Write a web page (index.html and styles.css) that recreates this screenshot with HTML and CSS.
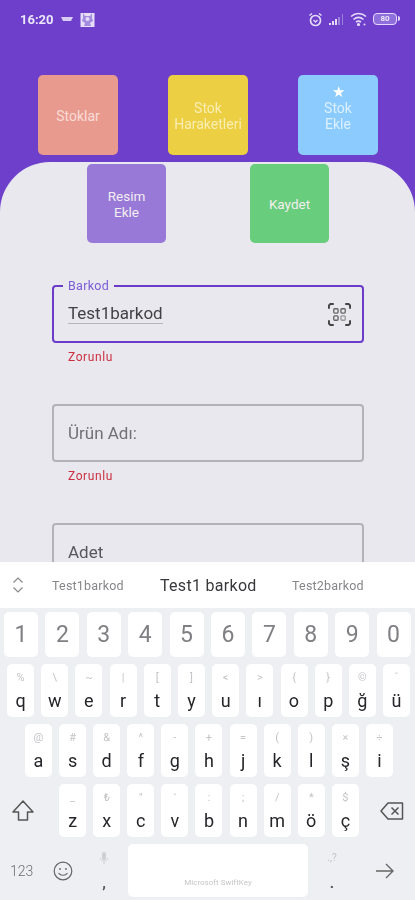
FILE: index.html
```html
<!DOCTYPE html>
<html lang="tr">

<head>
    <meta charset="UTF-8" />
    <meta name="viewport" content="width=device-width, initial-scale=1" />
    <title>Stok Ekle</title>
    <link rel="stylesheet" href="styles.css">
</head>

<body>

    <div class="app">
        <header class="top">
            <div class="status-bar">
                <span class="time">16:20</span>
                <svg class="note-pill" width="12" height="6" viewBox="0 0 12 6">
                    <path d="M0 1h12L10 5H2z" fill="#d9cdf5" />
                </svg>
                <svg class="note-img" width="15" height="15" viewBox="0 0 15 15">
                    <rect x="0.5" y="1" width="14" height="14" fill="#e6def8" />
                    <path d="M3 1l2 3h5l2-3v5l1 3-3 2 1 3H4l1-3-3-2 1-3z" fill="#a58be0" />
                    <circle cx="7.5" cy="7" r="2" fill="#e6def8" />
                </svg>
                <span class="status-gap"></span>
                <svg width="15" height="15" viewBox="0 0 15 15" fill="none" stroke="#e4daf8">
                    <circle cx="7.5" cy="8.5" r="5" stroke-width="1.7" />
                    <path d="M1.5 3.5l2.5-2M13.5 3.5l-2.5-2" stroke-width="1.5" />
                    <path d="M5.5 8l2 2 2-2" stroke-width="1.3" />
                </svg>
                <svg class="signal" width="16" height="13" viewBox="0 0 16 13">
                    <path d="M1 10h2v2H1zM4 8h2v4H4zM7 6h2v6H7z" fill="#e4daf8" />
                    <path d="M10 4h2v8h-2zM14 1h1v11h-1z" fill="#9a7fdd" />
                </svg>
                <svg class="wifi" width="17" height="14" viewBox="0 0 17 14" fill="none" stroke="#e4daf8"
                    stroke-width="1.6">
                    <path d="M1 4.5c4.5-4 10.500-4 15 0M3.500 7.500c3-2.500 7-2.500 10 0M6 10c1.500-1 3.500-1 5 0" />
                    <circle cx="8.5" cy="12.5" r="0.8" fill="#e4daf8" />
                    <circle cx="14.5" cy="12.5" r="1" fill="#e4daf8" stroke="none" />
                </svg>
                <span class="battery"><span class="battery-level">80</span></span>
            </div>

            <div class="tile-row tile-row-first">
                <a class="tile tile-red">Stoklar</a>
                <a class="tile tile-yellow">Stok<br>Haraketleri</a>
                <a class="tile tile-blue">
                    <span class="tile-star">★</span>
                    Stok<br>Ekle
                </a>
            </div>
        </header>

        <main class="panel">
            <div class="tile-row tile-row-second">
                <a class="tile tile-purple">Resim<br>Ekle</a>
                <a class="tile tile-green">Kaydet</a>
            </div>

            <div class="form">
                <div class="form-group">
                    <div class="field field-active">
                        <span class="field-label">Barkod</span>
                        <span class="field-value">Test1barkod</span>
                        <svg class="scan-icon" width="23" height="23" viewBox="0 0 24 24" fill="none"
                            stroke="#444" stroke-width="2">
                            <path d="M1 6V2.500L2.500 1H6M18 1h3.500L23 2.500V6M23 18v3.500L21.500 23H18M6 23H2.500L1 21.500V18" />
                            <g stroke-width="1.400" stroke="#666">
                                <rect x="6" y="6" width="4.500" height="4.500" rx="1" />
                                <rect x="13.500" y="6" width="4.500" height="4.500" rx="1" />
                                <rect x="6" y="13.500" width="4.500" height="4.500" rx="1" />
                                <rect x="13.500" y="13.500" width="4.500" height="4.500" rx="1" stroke="#999" />
                            </g>
                        </svg>
                    </div>
                    <div class="field-error">Zorunlu</div>
                </div>

                <div class="form-group">
                    <div class="field">
                        <span class="field-hint">Ürün Adı:</span>
                    </div>
                    <div class="field-error">Zorunlu</div>
                </div>

                <div class="form-group">
                    <div class="field">
                        <span class="field-hint field-hint-dark">Adet</span>
                    </div>
                </div>
            </div>
        </main>

        <section class="keyboard">
            <div class="suggestions">
                <svg class="suggest-toggle" width="12" height="16" viewBox="0 0 12 16" fill="none" stroke="#888"
                    stroke-width="1.2">
                    <path d="M1.5 5.5L6 1l4.500 4.500M1.500 10.500L6 15l4.500-4.500" />
                </svg>
                <span class="suggest suggest-left">Test1barkod</span>
                <span class="suggest suggest-main">Test1 barkod</span>
                <span class="suggest suggest-right">Test2barkod</span>
            </div>

            <div class="keys">
                <div class="key-row digits">
                    <span class="key digit">1</span>
                    <span class="key digit">2</span>
                    <span class="key digit">3</span>
                    <span class="key digit">4</span>
                    <span class="key digit">5</span>
                    <span class="key digit">6</span>
                    <span class="key digit">7</span>
                    <span class="key digit">8</span>
                    <span class="key digit">9</span>
                    <span class="key digit">0</span>
                </div>

                <div class="key-row letters-top">
                    <span class="key"><small>%</small>q</span>
                    <span class="key"><small>\</small>w</span>
                    <span class="key"><small>~</small>e</span>
                    <span class="key"><small>|</small>r</span>
                    <span class="key"><small>[</small>t</span>
                    <span class="key"><small>]</small>y</span>
                    <span class="key"><small>&lt;</small>u</span>
                    <span class="key"><small>&gt;</small>ı</span>
                    <span class="key"><small>{</small>o</span>
                    <span class="key"><small>}</small>p</span>
                    <span class="key"><small>©</small>ğ</span>
                    <span class="key"><small>ˇ</small>ü</span>
                </div>

                <div class="key-row letters-middle">
                    <span class="key"><small>@</small>a</span>
                    <span class="key"><small>#</small>s</span>
                    <span class="key"><small>&amp;</small>d</span>
                    <span class="key"><small>^</small>f</span>
                    <span class="key"><small>-</small>g</span>
                    <span class="key"><small>+</small>h</span>
                    <span class="key"><small>=</small>j</span>
                    <span class="key"><small>(</small>k</span>
                    <span class="key"><small>)</small>l</span>
                    <span class="key"><small>×</small>ş</span>
                    <span class="key"><small>÷</small>i</span>
                </div>

                <div class="key-row letters-bottom">
                    <span class="key-plain">
                        <svg width="24" height="24" viewBox="0 0 24 24" fill="none" stroke="#555"
                            stroke-width="1.5" stroke-linejoin="round">
                            <path d="M12 2L2 13h5.500v8h9v-8H22z" />
                        </svg>
                    </span>
                    <span class="key"><small>_</small>z</span>
                    <span class="key"><small>₺</small>x</span>
                    <span class="key"><small>"</small>c</span>
                    <span class="key"><small>'</small>v</span>
                    <span class="key"><small>:</small>b</span>
                    <span class="key"><small>;</small>n</span>
                    <span class="key"><small>/</small>m</span>
                    <span class="key"><small>*</small>ö</span>
                    <span class="key"><small>$</small>ç</span>
                    <span class="key-plain">
                        <svg width="24" height="20" viewBox="0 0 24 20" fill="none" stroke="#555"
                            stroke-width="1.5" stroke-linejoin="round">
                            <path d="M8 2h14.500v16H8L1 10z" />
                            <path d="M11.500 6.500l7 7M18.500 6.500l-7 7" />
                        </svg>
                    </span>
                </div>

                <div class="key-row bottom-row">
                    <span class="bottom-num">123</span>
                    <svg class="bottom-emoji" width="20" height="20" viewBox="0 0 20 20" fill="none" stroke="#666"
                        stroke-width="1.2">
                        <circle cx="10" cy="10" r="8.800" />
                        <circle cx="7" cy="8" r="0.900" fill="#666" stroke="none" />
                        <circle cx="13" cy="8" r="0.900" fill="#666" stroke="none" />
                        <path d="M5.500 12c2 3 7 3 9 0" />
                    </svg>
                    <span class="bottom-side">
                        <svg width="8" height="12" viewBox="0 0 8 12">
                            <rect x="2" y="0" width="4" height="8" rx="2" fill="#cfd0d4" />
                            <path d="M0.500 6c0 4 7 4 7 0M4 10v2" fill="none" stroke="#cfd0d4" />
                        </svg>
                        <b>,</b>
                    </span>
                    <span class="space-key">Microsoft SwiftKey</span>
                    <span class="bottom-side bottom-side-right">
                        <small>.,?</small>
                        <b>.</b>
                    </span>
                    <svg class="bottom-arrow" width="18" height="16" viewBox="0 0 18 16" fill="none" stroke="#666"
                        stroke-width="1.4">
                        <path d="M0 8h17M10 1l7 7-7 7" />
                    </svg>
                </div>
            </div>
        </section>
    </div>

</body>

</html>
```

FILE: styles.css
```css
html,
body {
    margin: 0;
    padding: 0;
    height: 100%;
    background-color: #6e3fcb;
    font-family: Roboto, "Liberation Sans", sans-serif;
    overflow: hidden;
}

.app {
    display: flex;
    flex-direction: column;
    width: 415px;
    height: 900px;
    filter: blur(0.4px);
}

/* ust mor alan */
.top {
    height: 162px;
    flex-shrink: 0;
}

.status-bar {
    display: flex;
    align-items: center;
    height: 38px;
    padding: 0 17px 0 20px;
    color: #ece6fb;
}

.time {
    font-size: 13px;
    font-weight: 700;
    width: 41px;
}

.note-pill {
    margin-right: 7px;
}

.status-gap {
    flex: 1;
}

.signal {
    margin-left: 5px;
}

.wifi {
    margin-left: 6px;
}

.battery {
    position: relative;
    display: flex;
    align-items: center;
    justify-content: center;
    box-sizing: border-box;
    width: 24px;
    height: 12px;
    margin: 0 1px 0 6px;
    border: 1.5px solid #e4daf8;
    border-radius: 4px;
    background: #8f6fdb;
}

.battery::after {
    content: "";
    position: absolute;
    right: -3.5px;
    top: 2px;
    width: 2px;
    height: 5px;
    border-radius: 0 2px 2px 0;
    background: #e4daf8;
}

.battery-level {
    font-size: 8px;
    font-weight: 700;
    line-height: 1;
    color: #efeafb;
}

.tile-row {
    display: flex;
}

.tile-row-first {
    gap: 50px;
    padding: 37px 0 0 38px;
}

.tile-row-second {
    gap: 84px;
    padding: 2px 0 0 87px;
}

.tile {
    position: relative;
    display: flex;
    align-items: center;
    justify-content: center;
    box-sizing: border-box;
    width: 80px;
    height: 80px;
    padding-top: 2px;
    border-radius: 5px;
    font-size: 14px;
    line-height: 16px;
    text-align: center;
    color: #f4eef0;
}

.tile-row-second .tile {
    width: 79px;
    height: 79px;
    padding-top: 1px;
    font-size: 13.5px;
}

.tile-red {
    background: #e99a8e;
    color: #f8dcd7;
}

.tile-yellow {
    background: #eccf42;
    color: #f8eeb4;
}

.tile-blue {
    background: #8bcbfe;
    color: #dcf0ff;
}

.tile-purple {
    background: #9879d8;
}

.tile-green {
    background: #68cd7c;
}

.tile-star {
    position: absolute;
    top: 9px;
    left: 0;
    width: 100%;
    font-size: 15px;
    line-height: 16px;
    color: #fff;
}

/* form */
.panel {
    flex: 1;
    min-height: 0;
    overflow: hidden;
    background-color: #e8e8ee;
    border-radius: 50px 50px 0 0;
}

.form {
    padding: 42px 51px 0 52px;
}

.form-group {
    height: 119px;
}

.field {
    position: relative;
    display: flex;
    align-items: center;
    box-sizing: border-box;
    height: 58px;
    padding: 0 14px;
    border: 2px solid #b2b2b8;
    border-radius: 4px;
}

.field-active {
    border-color: #6a3cc9;
}

.field-label {
    position: absolute;
    top: -8px;
    left: 9px;
    padding: 0 5px;
    background-color: #e8e8ee;
    font-size: 12.5px;
    line-height: 14px;
    letter-spacing: 0.3px;
    color: #7b5bd6;
}

.field-value {
    font-size: 17px;
    line-height: 19px;
    color: #424246;
    border-bottom: 1px solid #b5b5bb;
}

.field-hint {
    font-size: 17px;
    color: #707076;
}

.field-hint-dark {
    color: #56565c;
}

.scan-icon {
    margin-left: auto;
    margin-right: -3px;
}

.field-error {
    margin: 6px 0 0 16px;
    font-size: 12px;
    line-height: 16px;
    letter-spacing: 0.6px;
    color: #cc3040;
}

/* klavye */
.keyboard {
    flex-shrink: 0;
    height: 338px;
    background-color: #eeeff3;
}

.suggestions {
    display: flex;
    align-items: center;
    height: 46px;
    background-color: #fff;
}

.suggest-toggle {
    margin-left: 12px;
}

.suggest {
    white-space: nowrap;
}

.suggest-left,
.suggest-right {
    font-size: 12.5px;
    letter-spacing: 0.2px;
    color: #86868a;
}

.suggest-left {
    margin-left: 28px;
    width: 108px;
}

.suggest-main {
    width: 132px;
    font-size: 16px;
    letter-spacing: 0.3px;
    color: #38383c;
}

.keys {
    display: flex;
    flex-direction: column;
    gap: 7px;
    padding-top: 4px;
}

.key-row {
    display: grid;
    height: 53px;
}

.digits {
    grid-template-columns: repeat(10, 34px);
    column-gap: 7.4px;
    height: 45px;
    padding-left: 4px;
}

.letters-top {
    grid-template-columns: repeat(12, 27px);
    column-gap: 7.2px;
    padding-left: 7px;
}

.letters-middle {
    grid-template-columns: repeat(11, 27px);
    column-gap: 7.1px;
    padding-left: 25px;
}

.letters-bottom {
    grid-template-columns: 52px repeat(9, 27px) 52px;
    column-gap: 7.1px;
}

.key {
    display: flex;
    flex-direction: column;
    align-items: center;
    justify-content: flex-end;
    box-sizing: border-box;
    padding-bottom: 6px;
    border-radius: 5px;
    background-color: #fff;
    font-size: 18px;
    line-height: 20px;
    color: #26262a;
}

.key small {
    margin-bottom: 6px;
    font-size: 11px;
    line-height: 14px;
    color: #c4c4c8;
}

.digit {
    justify-content: center;
    padding-bottom: 0;
    font-size: 23px;
    color: #808084;
}

.key-plain {
    display: flex;
    align-items: center;
    justify-content: center;
}

.letters-bottom .key-plain:first-child {
    justify-content: flex-end;
    padding-right: 17px;
}

.letters-bottom .key-plain:last-child {
    justify-content: flex-start;
    padding-left: 14px;
}

.bottom-row {
    display: flex;
    align-items: center;
}

.bottom-num {
    width: 53px;
    padding-left: 10px;
    box-sizing: border-box;
    font-size: 14px;
    font-weight: 300;
    color: #6c6c70;
}

.bottom-side {
    display: flex;
    flex-direction: column;
    align-items: center;
    justify-content: space-between;
    width: 55px;
    height: 53px;
    padding: 8px 0 6px 7px;
    box-sizing: border-box;
}

.bottom-side b {
    font-size: 15px;
    line-height: 16px;
    color: #55555a;
}

.bottom-side small {
    font-size: 10px;
    color: #c4c4c8;
}

.space-key {
    display: flex;
    align-items: flex-end;
    justify-content: center;
    box-sizing: border-box;
    width: 180px;
    height: 53px;
    padding-bottom: 9px;
    border-radius: 5px;
    background-color: #fff;
    font-size: 8px;
    line-height: 10px;
    color: #c6c6ca;
}

.bottom-side-right {
    width: 48px;
    padding-left: 0;
}

.bottom-arrow {
    margin-left: 20px;
}
```
